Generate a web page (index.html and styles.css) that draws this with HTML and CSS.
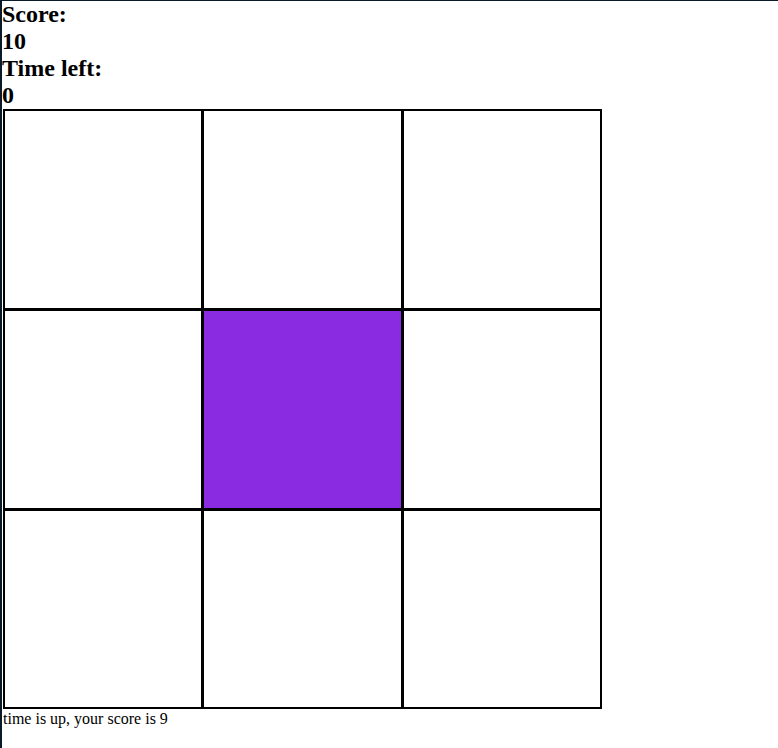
FILE: index.html
```html
<!DOCTYPE html>
<html>
<head>
<meta charset="utf-8">
<link rel="stylesheet" href="styles.css">
</head>
<body>
<h2 class="label">Score:</h2>
<h2 class="value">10</h2>
<h2 class="label">Time left:</h2>
<h2 class="value">0</h2>
<div class="grid">
  <div class="square"></div>
  <div class="square"></div>
  <div class="square"></div>
  <div class="square"></div>
  <div class="square mole"></div>
  <div class="square"></div>
  <div class="square"></div>
  <div class="square"></div>
  <div class="square"></div>
</div>
<div class="message">time is up, your score is 9</div>
</body>
</html>
```
FILE: styles.css
```css
html {
  background: #0b1a28;
}
body {
  margin: 1px 0 0 2px;
  min-height: 747px;
  background: #ffffff;
  font-family: "Liberation Serif", "Times New Roman", serif;
  color: #000;
}
h2 {
  margin: 0;
  font-size: 24px;
  font-weight: bold;
  line-height: 27px;
}
.grid {
  display: grid;
  grid-template-columns: 196px 197px 196px;
  grid-template-rows: 197px 197px 196px;
  gap: 3px;
  width: 595px;
  border: 2px solid #000;
  background: #000;
  margin-left: 1px;
}
.square {
  background: #ffffff;
}
.square.mole {
  background: #8a2be2;
}
.message {
  font-size: 16px;
  line-height: 18px;
  margin-left: 1px;
  padding-top: 1px;
}
```
